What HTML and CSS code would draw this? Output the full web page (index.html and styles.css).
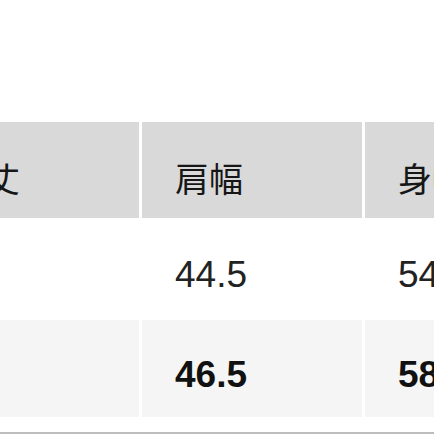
FILE: index.html
```html
<!DOCTYPE html>
<html lang="ja">
<head>
<meta charset="utf-8">
<link rel="stylesheet" href="styles.css">
</head>
<body>
<div class="page">
  <div class="table">
    <div class="row head">
      <div class="cell">着丈</div>
      <div class="cell">肩幅</div>
      <div class="cell">身幅</div>
    </div>
    <div class="row data">
      <div class="cell">72</div>
      <div class="cell">44.5</div>
      <div class="cell">54.5</div>
    </div>
    <div class="row data alt">
      <div class="cell">76</div>
      <div class="cell">46.5</div>
      <div class="cell">58.5</div>
    </div>
  </div>
  <div class="rule"></div>
</div>
</body>
</html>
```
FILE: styles.css
```css
html, body {
  margin: 0;
  padding: 0;
  background: #ffffff;
}
body {
  width: 434px;
  height: 434px;
  overflow: hidden;
}
.page {
  padding-top: 122px;
  width: 434px;
}
.table {
  display: flex;
  flex-direction: column;
  gap: 2px;
}
.row {
  display: flex;
  gap: 3px;
  margin-left: -81px;
}
.cell {
  flex: none;
  width: 220px;
  box-sizing: border-box;
  padding-left: 33px;
  white-space: nowrap;
  overflow: hidden;
}
.head .cell {
  height: 96px;
  background: #d9d9d9;
  padding-top: 39px;
  font-family: "Noto Sans CJK JP", "Noto Sans", sans-serif;
  font-size: 34px;
  line-height: 34px;
  color: #161616;
}
.data .cell {
  height: 98px;
  padding-top: 36px;
  font-family: "Liberation Sans", Arial, sans-serif;
  font-size: 37px;
  line-height: 37px;
  color: #222222;
}
.alt .cell {
  height: 97px;
  background: #f5f5f5;
  font-weight: bold;
  color: #111111;
}
.rule {
  margin-top: 15px;
  height: 2px;
  background: #bdbdbd;
}
```
